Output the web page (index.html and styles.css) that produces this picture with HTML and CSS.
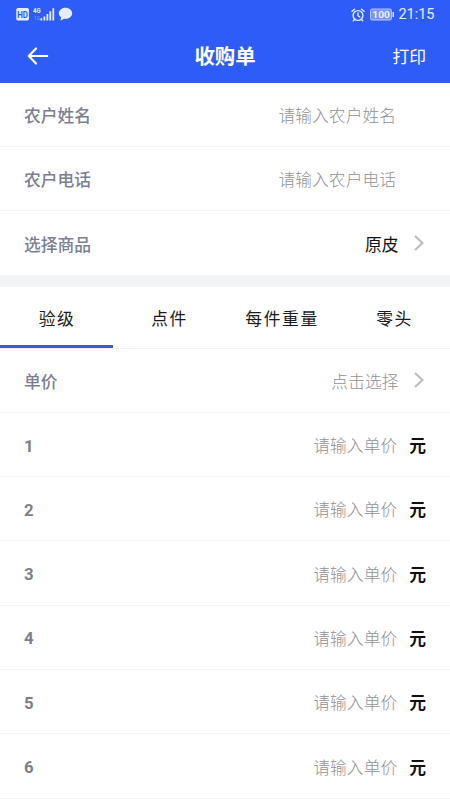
FILE: index.html
```html
<!DOCTYPE html>
<html lang="zh-CN">
<head>
<meta charset="utf-8">
<title>收购单</title>
<link rel="stylesheet" href="styles.css">
</head>
<body>
<header class="header">
  <div class="status">
    <svg class="status-left" width="60" height="18" viewBox="0 0 60 18" fill="#e6edff">
      <rect x="0.3" y="3" width="12.6" height="12.6" rx="1.6"/>
      <text class="hd" x="1.2" y="12.6" textLength="10.8" lengthAdjust="spacingAndGlyphs">HD</text>
      <text class="net" x="17" y="8.400" textLength="7.6" lengthAdjust="spacingAndGlyphs">4G</text>
      <text class="net-sub" x="18" y="14.6">1G</text>
      <path d="M24.400 13.300h1.800V15.500h-1.800zM27.500 11.500h1.800v4h-1.800zM30.500 9h1.800v6.500h-1.800zM33.400 6.200h1.800v9.300h-1.800zM36.400 3.200h1.800V15.500h-1.800z"/>
      <path d="M49.500 2.800c3.800 0 6.700 2.500 6.700 5.500s-2.900 5.600-6.700 5.600c-.5 0-1 0-1.500-.1L44.500 15.800l.6-3.500C43.700 11.300 42.800 9.900 42.800 8.300c0-3 2.900-5.500 6.700-5.500z"/>
    </svg>
    <div class="status-right">
      <svg width="14" height="14" viewBox="0 0 14 14" fill="none" stroke="#e6edff" stroke-width="1.400" stroke-linecap="round" stroke-linejoin="round">
        <circle cx="7" cy="7.500" r="4.900"/><path d="M7 5v2.700l1.800 1.300M1 3.300 3.500 1.200M13 3.300 10.500 1.200M3.300 11.700 2.300 12.800M10.700 11.700l1 1.100"/>
      </svg>
      <svg class="battery" width="25" height="14" viewBox="0 0 25 14">
        <rect x="0.500" y="1" width="21" height="11" rx="1.500" fill="#7894f9" stroke="#b4c6ff"/>
        <rect x="22.500" y="4" width="1.500" height="5" fill="#d5dfff"/>
        <text class="level" x="2.300" y="10.200" textLength="17.500" lengthAdjust="spacingAndGlyphs">100</text>
      </svg>
      <span class="clock">21:15</span>
    </div>
  </div>
  <div class="navbar">
    <svg class="back" width="22" height="18" viewBox="0 0 22 18" fill="none" stroke="#fff" stroke-width="2.200" stroke-linecap="round" stroke-linejoin="round"><path d="M20.200 9H2M9 1.500 1.800 9 9 16.500"/></svg>
    <h1 class="title">收购单</h1>
    <span class="print">打印</span>
  </div>
</header>

<section class="info">
  <div class="row"><span class="label">农户姓名</span><span class="hint name">请输入农户姓名</span></div>
  <div class="row"><span class="label">农户电话</span><span class="hint name">请输入农户电话</span></div>
  <div class="row"><span class="label">选择商品</span><span class="value">原皮</span><svg class="chevron" width="10" height="16" viewBox="0 0 10 16"><path d="M1 1 8.500 8 1 15"/></svg></div>
</section>

<nav class="tabs">
  <span class="tab active">验级</span><span class="tab">点件</span><span class="tab">每件重量</span><span class="tab">零头</span>
</nav>

<section class="prices">
  <div class="row"><span class="label">单价</span><span class="hint">点击选择</span><svg class="chevron" width="10" height="16" viewBox="0 0 10 16"><path d="M1 1 8.500 8 1 15"/></svg></div>
  <div class="row"><span class="label number">1</span><span class="hint">请输入单价</span><span class="unit">元</span></div>
  <div class="row"><span class="label number">2</span><span class="hint">请输入单价</span><span class="unit">元</span></div>
  <div class="row"><span class="label number">3</span><span class="hint">请输入单价</span><span class="unit">元</span></div>
  <div class="row"><span class="label number">4</span><span class="hint">请输入单价</span><span class="unit">元</span></div>
  <div class="row"><span class="label number">5</span><span class="hint">请输入单价</span><span class="unit">元</span></div>
  <div class="row"><span class="label number">6</span><span class="hint">请输入单价</span><span class="unit">元</span></div>
</section>
</body>
</html>
```
FILE: styles.css
```css
* { box-sizing: border-box; }
body {
  margin: 0;
  height: 800px;
  overflow: hidden;
  background: #fff;
  color: #1b1b1b;
  font: 16.8px/24px Roboto, "Noto Sans CJK SC", sans-serif;
}
.header { height: 82.5px; background: #2d5cf6; color: #fff; }
.status {
  display: flex;
  justify-content: space-between;
  height: 30px;
  padding: 5px 15.5px 0 16px;
}
.status-right { display: flex; align-items: center; height: 19px; color: #e6edff; }
.battery { margin-left: 5px; }
.clock { margin-left: 3px; font-size: 14.5px; line-height: 20px; }
.hd { font: bold 8.5px Roboto, sans-serif; fill: #2d5cf6; }
.net { font: bold 7.5px Roboto, sans-serif; }
.net-sub { font: 5px Roboto, sans-serif; fill: #7f9cfa; }
.level { font: bold 9.8px Roboto, sans-serif; fill: #edf2ff; }
.navbar {
  display: grid;
  grid-template-columns: 1fr auto 1fr;
  align-items: center;
  height: 52px;
  padding: 0 24px 0 27px;
}
.title { margin: 1px 3px 0 0; font-size: 20.4px; font-weight: 700; }
.print { justify-self: end; margin-top: 1px; }
.row {
  display: flex;
  align-items: center;
  height: 64.3px;
  padding: 3px 24px 0;
  border-bottom: 1px solid #f5f5f7;
}
.label { margin-right: auto; color: #7b7f93; font-weight: 700; }
.label.number { margin-top: -1px; color: #7d7f8b; }
.hint, .value { margin-right: 5px; }
.hint { color: #929292; font-weight: 300; }
.hint.name { margin-right: 30px; }
.value { color: #111; }
.chevron { margin: 0 2px 3px 11px; fill: none; stroke: #b9bac3; stroke-width: 2; }
.row .value + .chevron, .row .hint + .chevron { margin-left: 10.500px; }
.unit { margin-left: 7px; color: #111; font-weight: 700; }
.info .label, .prices .label:not(.number) { font-weight: 500; }
.info { border-bottom: 12px solid #f3f4f6; }
.info .row:last-child { height: 64px; border-bottom: 0; }
.tabs {
  display: grid;
  grid-template-columns: repeat(4, 1fr);
  height: 61.5px;
  border-bottom: 1px solid #f2f2f4;
}
.tab {
  position: relative;
  padding-left: 1.6px;
  text-align: center;
  line-height: 64px;
  font-size: 16.8px;
  letter-spacing: 1.6px;
}
.tab.active::after {
  content: "";
  position: absolute;
  left: 0;
  right: 0;
  top: 58px;
  height: 3px;
  background: #345fc8;
}
```
